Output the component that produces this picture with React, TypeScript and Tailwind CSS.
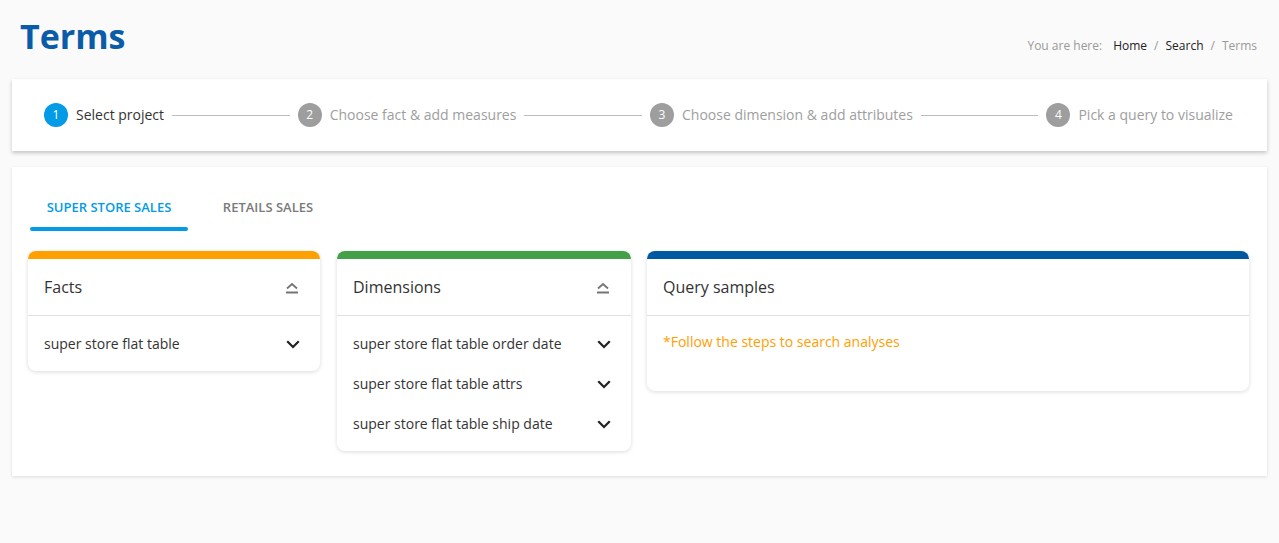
import React, { useState } from 'react';

type Panel = {
    title: string;
    bar: string;
    width: string;
    items?: string[];
    collapsible: boolean;
};

const steps = [
    'Select project',
    'Choose fact & add measures',
    'Choose dimension & add attributes',
    'Pick a query to visualize',
];

const ChevronDown = () => (
    <svg className="w-6 h-6" viewBox="0 0 24 24" fill="none" stroke="#222" strokeWidth="2.2" strokeLinecap="square">
        <polyline points="7,10 12,15 17,10" />
    </svg>
);

const CollapseIcon = () => (
    <svg className="w-6 h-6" viewBox="0 0 24 24" fill="none" stroke="#757575" strokeWidth="1.8">
        <polyline points="7,13.5 12,9 17,13.5" />
        <line x1="6" y1="17.5" x2="18" y2="17.5" strokeWidth="2" />
    </svg>
);

const Stepper: React.FC = () => (
    <div className="mx-3 mt-[21px] h-[72px] bg-white shadow-[0_2px_4px_rgba(0,0,0,0.22)] flex items-center pl-8 pr-[34px]">
        {steps.map((label, i) => (
            <React.Fragment key={label}>
                {i > 0 && <div className="flex-1 h-px bg-[#bdbdbd] mx-2" />}
                <div className="flex items-center gap-2 shrink-0">
                    <span
                        className={
                            i === 0
                                ? 'w-6 h-6 rounded-full bg-[#039be5] text-white text-xs flex items-center justify-center'
                                : 'w-6 h-6 rounded-full bg-[#9e9e9e] text-white text-xs flex items-center justify-center'
                        }
                    >
                        {i + 1}
                    </span>
                    <span className={i === 0 ? 'text-sm text-[#333]' : 'text-sm text-[#9e9e9e]'}>{label}</span>
                </div>
            </React.Fragment>
        ))}
    </div>
);

const PanelCard: React.FC<{ panel: Panel; className?: string }> = ({ panel, className = '' }) => (
    <div className={`${panel.width} ${className} bg-white rounded-lg shadow-[0_1px_4px_rgba(0,0,0,0.14)] overflow-hidden self-start`}>
        <div className={`h-2 ${panel.bar}`} />
        <div className="h-[57px] px-4 flex items-center justify-between border-b border-[#e0e0e0]">
            <span className="text-base text-[#333]">{panel.title}</span>
            {panel.collapsible && <CollapseIcon />}
        </div>
        {panel.items ? (
            <ul className="pt-2 pb-[7px]">
                {panel.items.map((item) => (
                    <li key={item} className="h-10 pl-4 pr-[15px] flex items-center justify-between text-sm text-[#333]">
                        <span>{item}</span>
                        <ChevronDown />
                    </li>
                ))}
            </ul>
        ) : (
            <div className="px-4 pt-4 h-[75px] text-sm leading-5 text-[#ffa000]">*Follow the steps to search analyses</div>
        )}
    </div>
);

export default function App() {
    const [tab, setTab] = useState(0);
    const tabs = ['SUPER STORE SALES', 'RETAILS SALES'];

    const panels: Panel[] = [
        { title: 'Facts', bar: 'bg-[#ffa000]', width: 'w-[292px]', items: ['super store flat table'], collapsible: true },
        {
            title: 'Dimensions',
            bar: 'bg-[#43a047]',
            width: 'w-[294px]',
            items: ['super store flat table order date', 'super store flat table attrs', 'super store flat table ship date'],
            collapsible: true,
        },
        { title: 'Query samples', bar: 'bg-[#0059a0]', width: 'flex-1', collapsible: false },
    ];
    const gaps = ['', 'ml-[17px]', 'ml-4'];

    return (
        <div className="min-h-[543px] bg-[#fafafa] font-['Open_Sans',sans-serif] pb-16">
            <div className="flex items-start justify-between px-5">
                <h1 className="pt-[14px] text-[34px] leading-[44px] font-bold text-[#0a5ca8]">Terms</h1>
                <nav className="mt-[38px] mr-[2px] text-xs leading-4 flex items-center gap-[7px]">
                    <span className="text-[#999] mr-[4px]">You are here:</span>
                    <span className="text-[#222]">Home</span>
                    <span className="text-[#999]">/</span>
                    <span className="text-[#222]">Search</span>
                    <span className="text-[#999]">/</span>
                    <span className="text-[#999]">Terms</span>
                </nav>
            </div>

            <Stepper />

            <div className="mx-3 mt-4 bg-white shadow-[0_1px_3px_rgba(0,0,0,0.12)] pt-4 pb-[25px] pl-4 pr-[18px]">
                <div className="flex ml-[2px]">
                    {tabs.map((t, i) => (
                        <button
                            key={t}
                            type="button"
                            onClick={() => setTab(i)}
                            className={
                                tab === i
                                    ? 'relative w-[158px] h-12 pt-[2px] text-[13px] font-semibold text-[#039be5]'
                                    : 'relative w-[160px] h-12 pt-[2px] text-[13px] font-semibold text-[#7a7a7a]'
                            }
                        >
                            {t}
                            {tab === i && <span className="absolute left-0 right-0 bottom-0 h-1 rounded-full bg-[#039be5]" />}
                        </button>
                    ))}
                </div>

                <div className="flex mt-5">
                    {panels.map((p, i) => (
                        <PanelCard key={p.title} panel={p} className={gaps[i]} />
                    ))}
                </div>
            </div>
        </div>
    );
}
